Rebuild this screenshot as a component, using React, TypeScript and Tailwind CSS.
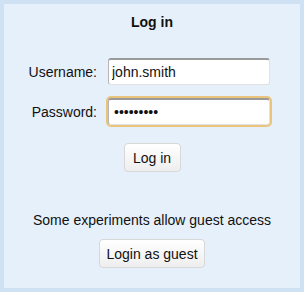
export default function App() {
  return (
    <div className="w-[304px] h-[292px] border-4 border-[#cfe2f4] bg-[#e6f0fa] text-[14px] leading-4 text-[#111] font-['Liberation_Sans',Arial,sans-serif] flex flex-col items-center">
      <h1 className="mt-[10px] font-bold">Log in</h1>

      <div className="mt-[28px] w-full flex flex-col gap-[13px]">
        <div className="flex items-center">
          <label className="w-[93px] text-right">Username:</label>
          <input
            className="ml-[11px] w-[162px] h-[27px] px-[3px] bg-white rounded-[3px] border border-[#e2e2e2] border-t-2 border-t-[#9a9a9a] border-l-[#b5b5b5] outline-none"
            defaultValue="john.smith"
          />
        </div>
        <div className="flex items-center">
          <label className="w-[93px] text-right">Password:</label>
          <input
            type="password"
            className="ml-[11px] w-[162px] h-[27px] px-[5px] bg-white rounded-[3px] border border-[#e2e2e2] border-t-2 border-t-[#9a9a9a] border-l-[#b5b5b5] ring-2 ring-[#ebc47c] outline-none"
            defaultValue="123456789"
          />
        </div>
      </div>

      <button className="mt-[18px] w-[57px] h-[29px] rounded-[4px] border border-[#d8d8d8] bg-gradient-to-b from-white to-[#eeeeee]">
        Log in
      </button>

      <p className="mt-[40px]">Some experiments allow guest access</p>

      <button className="mt-[11px] w-[106px] h-[29px] rounded-[4px] border border-[#d8d8d8] bg-gradient-to-b from-white to-[#eeeeee]">
        Login as guest
      </button>
    </div>
  );
}
